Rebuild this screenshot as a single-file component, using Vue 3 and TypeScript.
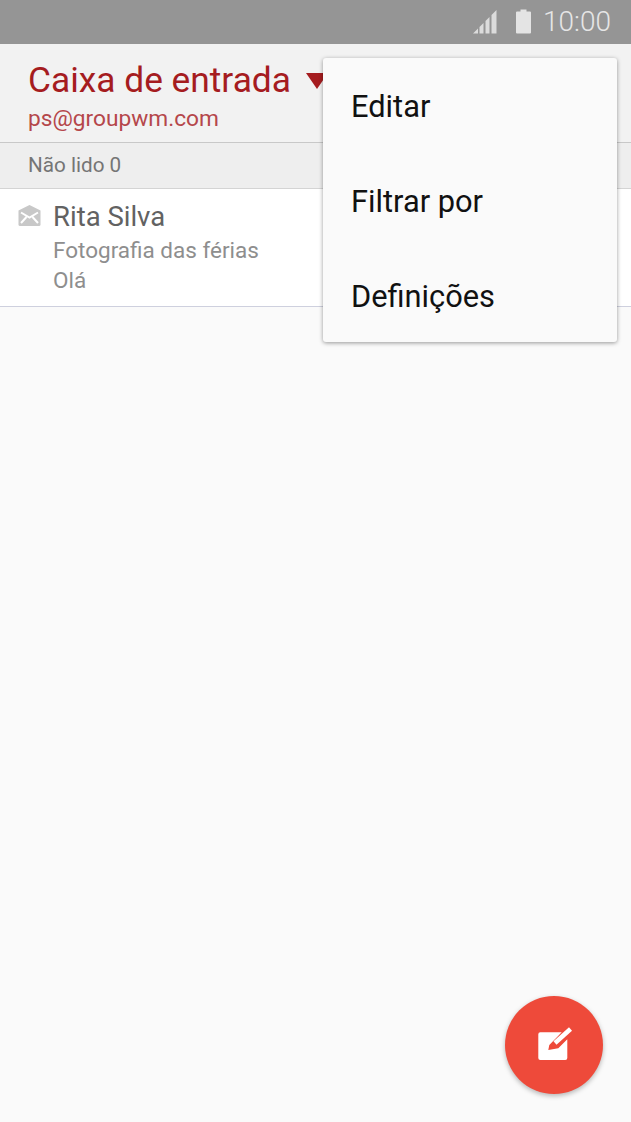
<script setup lang="ts">
  interface MenuItem {
    id: string
    label: string
  }

  const menuItems: MenuItem[] = [
    { id: 'edit', label: 'Editar' },
    { id: 'filter', label: 'Filtrar por' },
    { id: 'settings', label: 'Definições' },
  ]
</script>

<template>
  <div class="phone">
    <div class="status-bar">
      <svg class="signal" width="24" height="24" viewBox="0 0 24 24" aria-hidden="true">
        <path d="M0 23.5 L5 18.5 V23.5 Z" />
        <path d="M6.5 17 L10.5 13 V23.5 H6.5 Z" />
        <path d="M12.5 11 L16.5 7 V23.5 H12.5 Z" />
        <path d="M18.5 5 L23.5 0 V23.5 H18.5 Z" />
      </svg>
      <svg class="battery" width="17" height="25" viewBox="0 0 17 25" aria-hidden="true">
        <path d="M5.5 0.5 H11.5 V2.5 H15 A1 1 0 0 1 16 3.5 V23.5 A1 1 0 0 1 15 24.5 H2 A1 1 0 0 1 1 23.5 V3.5 A1 1 0 0 1 2 2.5 H5.5 Z" />
      </svg>
      <span class="clock">10:00</span>
    </div>

    <header class="mail-header">
      <div class="title-row">
        <h1 class="title">Caixa de entrada</h1>
        <span class="caret" />
      </div>
      <div class="account">ps@groupwm.com</div>
    </header>

    <div class="unread-bar">Não lido 0</div>

    <div class="mail-row">
      <svg class="mail-icon" width="23" height="21" viewBox="0 0 23 21" aria-hidden="true">
        <path d="M11.5 0 L22.5 5.5 V19.5 A1.5 1.5 0 0 1 21 21 H2 A1.5 1.5 0 0 1 0.5 19.5 V5.5 Z" />
        <path class="mail-flap" d="M3 7.5 L11.5 12.5 L20 7.5 M3 18 L8.5 12 M20 18 L14.5 12" />
      </svg>
      <div class="mail-text">
        <div class="sender">Rita Silva</div>
        <div class="subject">Fotografia das férias</div>
        <div class="preview">Olá</div>
      </div>
    </div>

    <ul class="menu" role="list">
      <li v-for="item in menuItems" :key="item.id" class="menu-item">{{ item.label }}</li>
    </ul>

    <button class="fab" type="button" aria-label="Escrever">
      <svg width="40" height="40" viewBox="0 0 40 40" aria-hidden="true">
        <path d="M4.3 9.3 A2 2 0 0 1 6.3 7.3 H27.7 L15.3 20 L14.3 25 L24.3 23.3 L33.3 14.3 V33 A2 2 0 0 1 31.3 35 H6.3 A2 2 0 0 1 4.3 33 Z" fill="#fff" />
        <path d="M21 18 L36.5 4" stroke="#fff" stroke-width="4.5" fill="none" />
      </svg>
    </button>
  </div>
</template>

<style>
html,
body {
  margin: 0;
  background: #fafafa;
}
</style>

<style scoped>
.phone {
  position: relative;
  width: 631px;
  height: 1122px;
  overflow: hidden;
  background: #fafafa;
  font-family: Roboto, "Noto Sans", sans-serif;
}

.status-bar {
  display: flex;
  align-items: center;
  justify-content: flex-end;
  height: 44px;
  padding-right: 20px;
  box-sizing: border-box;
  background: #959595;
  color: #e6e6e6;
}

.signal {
  fill: #dcdcdc;
  margin-right: 18px;
  margin-top: 0;
}

.battery {
  fill: #e4e4e4;
  margin-right: 11px;
  margin-bottom: 2px;
}

.clock {
  font-size: 28px;
  font-weight: 300;
  line-height: 48px;
}

.mail-header {
  height: 99px;
  padding: 16px 0 0 28px;
  box-sizing: border-box;
  background: #f2f2f2;
  border-bottom: 1px solid #c8c8c8;
}

.title-row {
  display: flex;
  align-items: center;
  gap: 15px;
}

.title {
  margin: 0;
  font-size: 35.3px;
  font-weight: 400;
  line-height: 40px;
  color: #a51c1f;
}

.caret {
  width: 0;
  height: 0;
  border-left: 11px solid transparent;
  border-right: 11px solid transparent;
  border-top: 16px solid #a51c1f;
  margin-top: 2px;
}

.account {
  margin-top: 5px;
  font-size: 22.7px;
  line-height: 28px;
  color: #b5474b;
}

.unread-bar {
  height: 46px;
  padding-left: 28px;
  box-sizing: border-box;
  background: #eeeeee;
  border-bottom: 1px solid #d4d4d4;
  font-size: 20.7px;
  line-height: 44px;
  color: #757575;
}

.mail-row {
  display: flex;
  height: 118px;
  box-sizing: border-box;
  padding: 13px 0 0 18px;
  background: #ffffff;
  border-bottom: 1px solid #ced0de;
}

.mail-icon {
  fill: #c8c8c8;
  margin-top: 3px;
  flex-shrink: 0;
}

.mail-flap {
  fill: none;
  stroke: #ffffff;
  stroke-width: 2;
}

.mail-text {
  margin-left: 12px;
}

.sender {
  font-size: 27.5px;
  line-height: 30px;
  color: #626262;
}

.subject,
.preview {
  font-size: 22.5px;
  line-height: 31px;
  color: #8e8e8e;
}

.subject {
  margin-top: 3px;
}

.preview {
  margin-top: -1px;
}

.menu {
  position: absolute;
  top: 58px;
  left: 323px;
  width: 294px;
  height: 284px;
  margin: 0;
  padding: 0;
  list-style: none;
  display: flex;
  flex-direction: column;
  background: #fafafa;
  border-radius: 3px;
  box-shadow: 0 1px 4px rgba(0, 0, 0, 0.4);
}

.menu-item {
  flex: 1;
  display: flex;
  align-items: center;
  padding-left: 28px;
  padding-top: 3px;
  font-size: 30.8px;
  color: #111111;
}

.fab {
  position: absolute;
  left: 505px;
  top: 996px;
  display: flex;
  align-items: center;
  justify-content: center;
  width: 98px;
  height: 98px;
  padding: 0;
  border: none;
  border-radius: 50%;
  background: #ee4a3a;
  box-shadow: 0 2px 5px rgba(0, 0, 0, 0.28);
}
</style>
